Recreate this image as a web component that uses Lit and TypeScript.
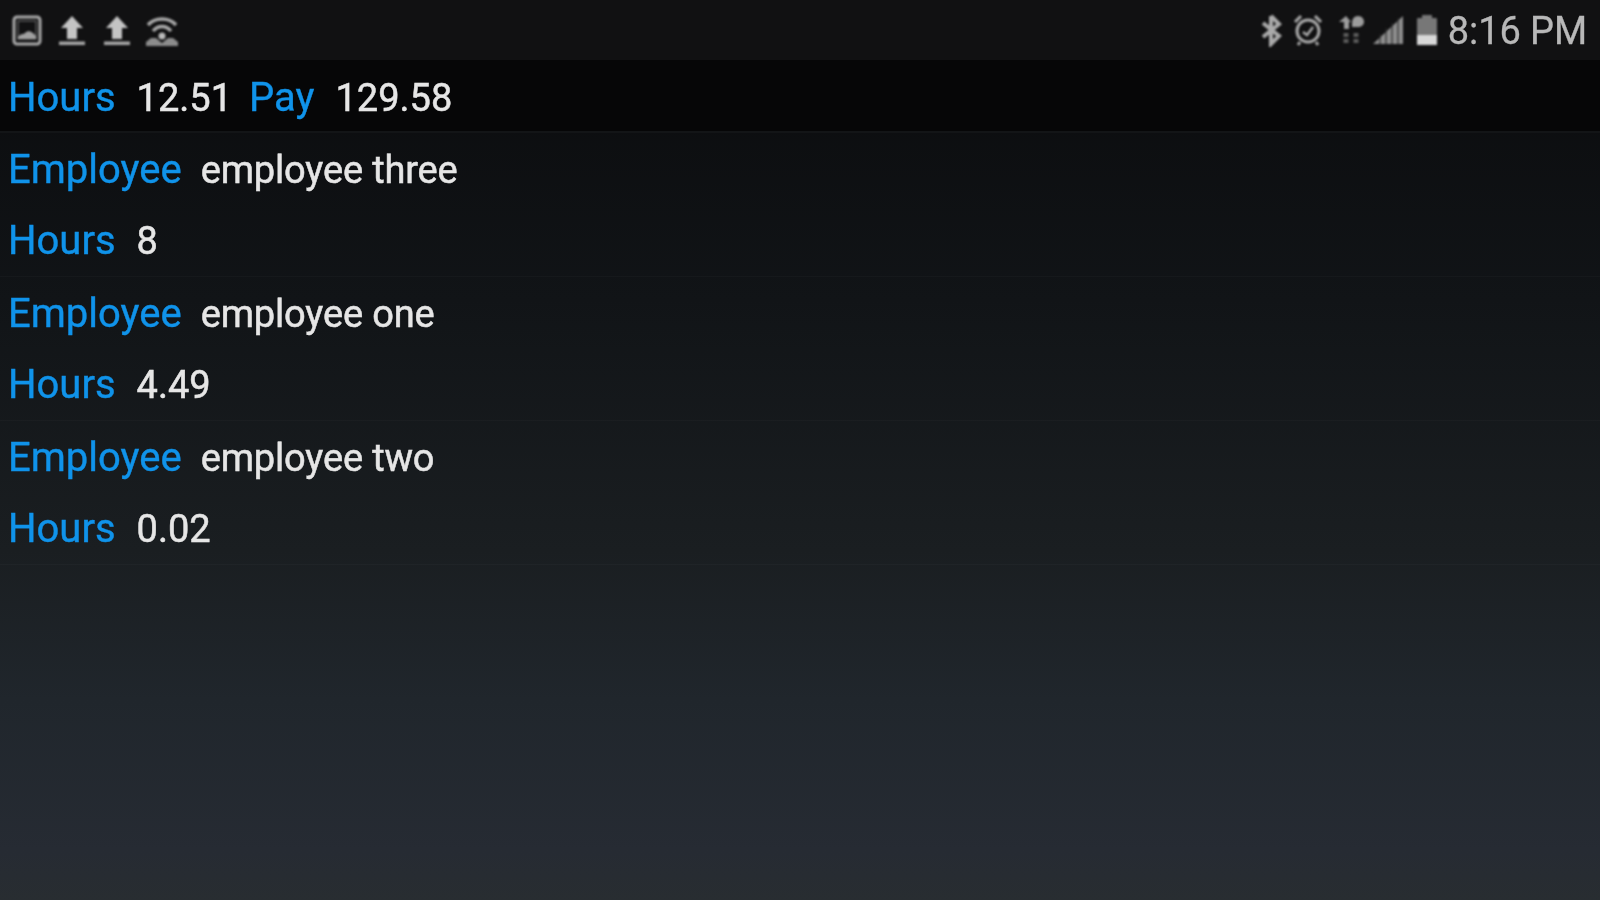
import { LitElement, html, css, svg } from "lit";
import { customElement } from "lit/decorators.js";

type Pair = [string, string];

@customElement("app-root")
export class AppRoot extends LitElement {
  static styles = css`
    :host {
      display: flex;
      flex-direction: column;
      width: 1600px;
      height: 900px;
      overflow: hidden;
      font-family: Roboto, "Liberation Sans", sans-serif;
      background: linear-gradient(180deg, #0b0c0e 60px, #111417 300px, #1a1e21 550px, #20262c 700px, #262b33 850px, #282d31 900px);
    }
    .status {
      flex: none;
      height: 60px;
      background: #111112;
      display: flex;
      align-items: center;
      justify-content: space-between;
      padding: 0 13px 0 11px;
      box-sizing: border-box;
    }
    .group { display: flex; align-items: center; }
    .status svg { display: block; filter: blur(0.9px); }
    .left { gap: 9px; }
    .left svg:nth-child(2) { margin-left: 2px; }
    .right { gap: 0; }
    .right svg:nth-child(1) { margin-right: 8px; }
    .right svg:nth-child(2) { margin-right: 13px; }
    .right svg:nth-child(3) { margin-right: 6px; }
    .right svg:nth-child(4) { margin-right: 10px; }
    .clock {
      font-size: 38px;
      color: #b8b8b8;
      margin-left: 9px;
      padding-top: 2px;
      letter-spacing: -0.1px;
      filter: blur(0.6px);
      -webkit-text-stroke: 0.3px #b8b8b8;
    }
    .summary {
      flex: none;
      height: 73px;
      background: #060607;
      border-bottom: 2px solid #131517;
      box-sizing: border-box;
      display: flex;
      align-items: center;
      padding: 3px 0 0 8px;
    }
    .summary .pair + .pair { margin-left: -4px; }
    .section {
      flex: none;
      height: 144px;
      border-bottom: 1px solid rgba(255, 255, 255, 0.025);
      box-sizing: border-box;
      display: flex;
      flex-direction: column;
    }
    .row { height: 71.5px; display: flex; align-items: center; padding: 1px 0 0 8px; box-sizing: border-box; }
    .pair { display: flex; align-items: baseline; }
    .label {
      color: #1093ea;
      font-size: 40px;
      margin-right: 21px;
      -webkit-text-stroke: 0.4px #1093ea;
    }
    .value { color: #e6e6e6; font-size: 38px; margin-right: 21px; -webkit-text-stroke: 0.5px #e6e6e6; }
    .label, .value { filter: blur(0.7px); }
    .text .label { margin-right: 19px; }
    .text .value { letter-spacing: -0.15px; }
  `;

  private pair([k, v]: Pair, text = false) {
    return html`<span class="pair ${text ? "text" : ""}"><span class="label">${k}</span><span class="value">${v}</span></span>`;
  }

  private icons = {
    picture: svg`<svg width="32" height="32" viewBox="0 0 32 32"><rect x="3" y="3" width="26" height="27" rx="3" fill="none" stroke="#aaa" stroke-width="3"/><rect x="7" y="7" width="18" height="18" fill="none" stroke="#555" stroke-width="1.5"/><path d="M7 23c3-4 5-2 7-4 3-3 7-2 11 3v3H7z" fill="#a0a0a0"/></svg>`,
    upload: svg`<svg width="36" height="32" viewBox="0 0 36 32"><path d="M18 2 29 14H23V25H13V14H7z" fill="#c4c4c4"/><rect x="5" y="27.5" width="26" height="3.5" fill="#a8a8a8"/></svg>`,
    wifi: svg`<svg width="36" height="34" viewBox="0 0 36 34"><g fill="none" stroke="#aaa" stroke-width="3.5"><path d="M4 12C11 4 25 4 32 12"/><path d="M9 18C14 12 22 12 27 18"/></g><circle cx="18" cy="23" r="3.5" fill="#bbb"/><path d="M2 33V29L7 25H12L18 30L24 25H29L34 29V33Z" fill="#8c8c8c"/></svg>`,
    bt: svg`<svg width="26" height="34" viewBox="0 0 26 34"><path d="M13 3V31L21 23L5 10M13 3L21 11L5 24" fill="none" stroke="#aaa" stroke-width="4"/></svg>`,
    alarm: svg`<svg width="32" height="34" viewBox="0 0 32 34"><circle cx="16" cy="18" r="11" fill="none" stroke="#aaa" stroke-width="3"/><path d="M11 19L15 22L21 14" fill="none" stroke="#aaa" stroke-width="2.5"/><path d="M3 9 9 3M29 9 23 3M8 29 6 32M24 29 26 32" stroke="#aaa" stroke-width="3"/></svg>`,
    data: svg`<svg width="28" height="34" viewBox="0 0 28 34"><path d="M9 3 14 9H12V16H7V9H2zM21 3C25 3 27 6 27 9C27 12 24 14 21 14H15V10C15 6 17 3 21 3Z" fill="#9c9c9c"/><path d="M9 20V30M19 20V30" stroke="#5c5c5c" stroke-width="5" stroke-dasharray="4 2"/></svg>`,
    signal: svg`<svg width="34" height="32" viewBox="0 0 34 32"><path d="M2 30 32 2V30Z" fill="#8e8e8e"/><path d="M9 30V20M15 30V14M21 30V9M27 30V4" stroke="#2a2a2a" stroke-width="1.2"/></svg>`,
    battery: svg`<svg width="24" height="34" viewBox="0 0 24 34"><rect x="7" y="2" width="10" height="4" fill="#777"/><rect x="2" y="5" width="20" height="27" rx="1" fill="#777"/><rect x="2" y="22" width="20" height="10" fill="#d8d8d8"/></svg>`,
  };

  private section(name: string, hours: string) {
    return html`<div class="section">
      <div class="row">${this.pair(["Employee", name], true)}</div>
      <div class="row">${this.pair(["Hours", hours])}</div>
    </div>`;
  }

  render() {
    const i = this.icons;
    return html`
      <div class="status">
        <div class="group left">${i.picture}${i.upload}${i.upload}${i.wifi}</div>
        <div class="group right">${i.bt}${i.alarm}${i.data}${i.signal}${i.battery}<span class="clock">8:16 PM</span></div>
      </div>
      <div class="summary">${this.pair(["Hours", "12.51"])}${this.pair(["Pay", "129.58"])}</div>
      ${this.section("employee three", "8")}
      ${this.section("employee one", "4.49")}
      ${this.section("employee two", "0.02")}
    `;
  }
}
